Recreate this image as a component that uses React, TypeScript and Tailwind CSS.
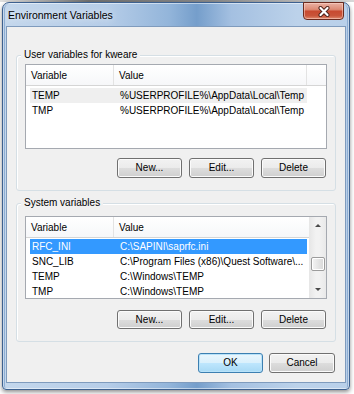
import React from "react";

function Btn({ label, w = "w-[65px]", primary = false, h = "h-[20px]" }: { label: string; w?: string; primary?: boolean; h?: string }) {
  return (
    <div
      className={
        primary
          ? `${w} ${h} rounded-[3px] border border-[#3c7fb1] bg-[linear-gradient(to_bottom,#eaf6fd_0%,#d9f0fc_50%,#bee6fd_51%,#a7d9f5_100%)] shadow-[inset_0_0_0_1px_#b8e2f9] flex items-center justify-center`
          : `${w} ${h} rounded-[3px] border border-[#707070] bg-[linear-gradient(to_bottom,#f2f2f2_0%,#ebebeb_50%,#dddddd_51%,#cfcfcf_100%)] shadow-[inset_0_0_0_1px_#fbfbfb] flex items-center justify-center`
      }
    >
      <span className="leading-none">{label}</span>
    </div>
  );
}

function Header({ scroll }: { scroll: boolean }) {
  return (
    <div className="h-[21px] flex border-b border-[#d5d5d5] bg-[linear-gradient(to_bottom,#ffffff,#f6f7f9)] shrink-0">
      <div className="w-[88px] pl-[5px] border-r border-[#e3e3e3] flex items-center">Variable</div>
      <div className={`${scroll ? "flex-1" : "w-[193px] border-r border-[#e3e3e3]"} pl-[5px] flex items-center`}>Value</div>
      {!scroll && <div className="flex-1" />}
    </div>
  );
}

function Row({ name, value, mode }: { name: string; value: string; mode?: "hover" | "sel" }) {
  const cls =
    mode === "sel"
      ? "bg-[#3399ff] text-white"
      : mode === "hover"
      ? "bg-[#efefef]"
      : "";
  return (
    <div className={`h-[15px] ml-[4px] w-[277px] flex items-center shrink-0 ${cls}`}>
      <div className="w-[88px] pl-[2px] whitespace-nowrap">{name}</div>
      <div className="flex-1 pl-[2px] whitespace-nowrap overflow-hidden">{value}</div>
    </div>
  );
}

function GroupBox({ title, children, h, mt }: { title: string; children: React.ReactNode; h: string; mt: string }) {
  return (
    <div className={`relative ${mt} ${h} rounded-[3px] border border-[#d5dfe5] shadow-[inset_1px_1px_0_#ffffff] flex flex-col px-[8px]`}>
      <span className="absolute left-[4px] top-[-8px] px-[3px] bg-[#f0f0f0] leading-[14px]">{title}</span>
      {children}
    </div>
  );
}

function Tri({ up }: { up: boolean }) {
  return up ? (
    <div className="w-0 h-0 border-l-[3px] border-r-[3px] border-b-[3px] border-l-transparent border-r-transparent border-b-[#4a4a4a]" />
  ) : (
    <div className="w-0 h-0 border-l-[3px] border-r-[3px] border-t-[3px] border-l-transparent border-r-transparent border-t-[#4a4a4a]" />
  );
}

export default function App() {
  return (
    <div className="w-[354px] h-[394px] bg-white overflow-hidden font-['Liberation_Sans',Arial,sans-serif] text-[10px] text-black">
      <div className="h-[2px] bg-[linear-gradient(to_right,#e0e0e0,#707070_25%,#8a8a8a_60%,#d8d8d8)]" />
      <div className="ml-[2px] w-[348px] h-[388px] rounded-t-[7px] rounded-b-[4px] border border-[#3d6190] bg-[linear-gradient(to_right,#c4d7ec_0%,#b6cde8_30%,#93b5da_48%,#759ecb_56%,#a4c0e1_66%,#bcd2ea_85%,#b9d0ea_100%)] shadow-[0_2px_4px_rgba(0,0,0,0.45),inset_0_0_0_1px_rgba(255,255,255,0.5),inset_2px_0_0_#8eaed4,inset_-2px_0_0_#8eaed4] flex flex-col">
        {/* Title bar */}
        <div className="h-[23px] flex items-start justify-between shrink-0">
          <div className="pl-[5px] mt-[6px] text-[10.5px] leading-[13px] text-black [text-shadow:0_0_6px_rgba(255,255,255,0.9)]">
            Environment Variables
          </div>
          <div className="mr-[5px] -mt-[1px] w-[41px] h-[18px] rounded-b-[4px] border border-[#6b2a1d] bg-[linear-gradient(to_bottom,#eab1a3_0%,#dd8b75_40%,#c84a30_52%,#c9553a_80%,#e08c70_100%)] shadow-[inset_0_0_0_1px_rgba(255,220,210,0.5)] flex items-center justify-center">
            <svg width="12" height="11" viewBox="0 0 12 11">
              <path d="M2.5 2 L9.5 9 M9.5 2 L2.5 9" stroke="#4a2018" strokeWidth="4" strokeLinecap="round" />
              <path d="M2.5 2 L9.5 9 M9.5 2 L2.5 9" stroke="#ffffff" strokeWidth="2.2" strokeLinecap="round" />
            </svg>
          </div>
        </div>
        {/* Client area */}
        <div className="mx-[3px] h-[357px] border border-[#7f9bbd] bg-[#f0f0f0] flex flex-col px-[9px] shrink-0">
          <GroupBox title="User variables for kweare" h="h-[136px]" mt="mt-[28px]">
            <div className="mt-[8px] h-[85px] border border-[#a5a9b0] bg-white flex flex-col overflow-hidden">
              <Header scroll={false} />
              <div className="pt-[2px] flex flex-col">
                <Row name="TEMP" value="%USERPROFILE%\AppData\Local\Temp" mode="hover" />
                <Row name="TMP" value="%USERPROFILE%\AppData\Local\Temp" />
              </div>
            </div>
            <div className="mt-[9px] flex justify-end gap-[7px] pr-[1px]">
              <Btn label="New..." />
              <Btn label="Edit..." />
              <Btn label="Delete" />
            </div>
          </GroupBox>
          <GroupBox title="System variables" h="h-[139px]" mt="mt-[12px]">
            <div className="mt-[12px] h-[83px] border border-[#a5a9b0] bg-white flex overflow-hidden">
              <div className="flex-1 flex flex-col overflow-hidden">
                <Header scroll={true} />
                <div className="pt-[1px] flex flex-col">
                  <Row name="RFC_INI" value="C:\SAPINI\saprfc.ini" mode="sel" />
                  <Row name="SNC_LIB" value="C:\Program Files (x86)\Quest Software\..." />
                  <Row name="TEMP" value="C:\Windows\TEMP" />
                  <Row name="TMP" value="C:\Windows\TEMP" />
                </div>
              </div>
              <div className="w-[17px] shrink-0 bg-[linear-gradient(to_right,#e6e6e6,#f2f2f2_40%,#f2f2f2_60%,#e9e9e9)] flex flex-col items-center">
                <div className="h-[17px] w-full flex items-center justify-center">
                  <Tri up={true} />
                </div>
                <div className="mt-[23px] h-[14px] w-[14px] rounded-[2px] border border-[#9c9c9c] bg-[linear-gradient(to_right,#f5f5f5,#e6e6e6_50%,#d8d8d8)] shadow-[inset_0_0_0_1px_#ffffff]" />
                <div className="flex-1" />
                <div className="h-[17px] w-full flex items-center justify-center">
                  <Tri up={false} />
                </div>
              </div>
            </div>
            <div className="mt-[11px] flex justify-end gap-[7px] pr-[1px]">
              <Btn label="New..." h="h-[19px]" />
              <Btn label="Edit..." h="h-[19px]" />
              <Btn label="Delete" h="h-[19px]" />
            </div>
          </GroupBox>
          <div className="mt-[11px] flex justify-end gap-[6px] pr-[1px]">
            <Btn label="OK" primary={true} />
            <Btn label="Cancel" w="w-[66px]" />
          </div>
        </div>
      </div>
    </div>
  );
}
